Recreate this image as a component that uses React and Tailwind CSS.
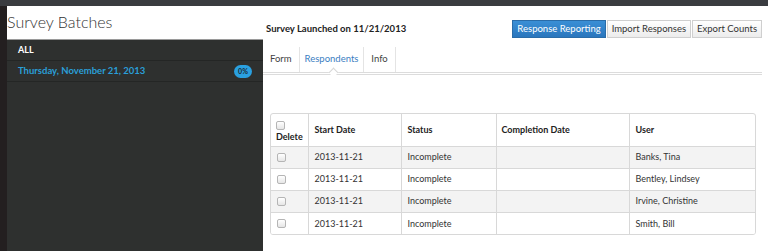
import React from 'react';

const rows = [
  { date: '2013-11-21', status: 'Incomplete', done: '', user: 'Banks, Tina' },
  { date: '2013-11-21', status: 'Incomplete', done: '', user: 'Bentley, Lindsey' },
  { date: '2013-11-21', status: 'Incomplete', done: '', user: 'Irvine, Christine' },
  { date: '2013-11-21', status: 'Incomplete', done: '', user: 'Smith, Bill' },
];

const Box = () => (
  <span className="inline-block w-[9px] h-[9px] rounded-[2px] border border-[#b5b5b5] bg-gradient-to-b from-white to-[#e6e6e6]" />
);

export default function App() {
  return (
    <div className="w-[768px] h-[251px] overflow-hidden bg-white flex flex-col font-['Lato','Open_Sans',sans-serif] text-[#333]">
      <div className="h-[6px] bg-[#3a3c40] shrink-0" />
      <div className="flex flex-1 min-h-0">
        <div className="w-[7px] bg-[#231f20] shrink-0" />

        {/* Batches sidebar */}
        <div className="w-[256px] shrink-0 flex flex-col">
          <div className="h-[34px] bg-white border-b border-[#9a9a9a] flex items-center">
            <h1 className="text-[16px] leading-none font-light text-[#333] pb-[2px]">Survey Batches</h1>
          </div>
          <div className="flex-1 bg-[#2e302f]">
            <div className="h-[21px] border-b border-[#242625] flex items-center pl-[11px]">
              <span className="text-[9px] font-bold text-white">ALL</span>
            </div>
            <div className="h-[21px] border-b border-[#242625] flex items-center justify-between pl-[11px] pr-[11px]">
              <span className="text-[9.5px] font-bold text-[#2a9fd8]">Thursday, November 21, 2013</span>
              <span className="w-[18px] h-[13px] rounded-full bg-[#2aa0e0] flex items-center justify-center text-[7px] font-bold text-[#1d2a33]">0%</span>
            </div>
          </div>
        </div>

        {/* Survey detail */}
        <div className="flex-1 flex flex-col pr-[6px]">
          <div className="flex items-center justify-between pt-[14px] h-[32px] pl-[3px]">
            <span className="text-[9.5px] font-bold text-[#222]">Survey Launched on 11/21/2013</span>
            <div className="flex gap-[1px] text-[9.5px]">
              <button className="h-[18px] px-[4px] bg-gradient-to-b from-[#3a8fd6] to-[#2a76bd] border border-[#2a6ca8] text-white">Response Reporting</button>
              <button className="h-[18px] px-[4px] bg-gradient-to-b from-white to-[#ececec] border border-[#cfcfcf] text-[#333]">Import Responses</button>
              <button className="h-[18px] px-[4px] bg-gradient-to-b from-white to-[#ececec] border border-[#cfcfcf] text-[#333]">Export Counts</button>
            </div>
          </div>

          <div className="mt-[9px] flex border-b-[3px] border-double border-[#dcdcdc] h-[28px] text-[9.5px]">
            <div className="w-[36px] pl-[7px] flex items-center text-[#444]">Form</div>
            <div className="relative w-[65px] border-x border-[#e4e4e4] flex items-center justify-center text-[#3a7ec2]">
              Respondents
              <span className="absolute -bottom-[4px] left-[30px] w-[7px] h-[7px] rotate-45 bg-white border-l border-t border-[#d6d6d6]" />
            </div>
            <div className="w-[32px] border-r border-[#e4e4e4] flex items-center justify-center text-[#444]">Info</div>
          </div>

          <div className="mt-[38px] ml-[7px] w-[486px] border border-[#d8d8d8] rounded-[3px] overflow-hidden">
            <table className="w-full border-collapse text-[9px]">
              <thead>
                <tr className="h-[32px] border-b border-[#d8d8d8] font-bold text-[#222]">
                  <th className="w-[37px] border-r border-[#d8d8d8] pl-[5px] text-left font-bold align-bottom pb-[5px]">
                    <div className="leading-none"><Box /></div>
                    <div className="leading-none mt-[1px]">Delete</div>
                  </th>
                  <th className="w-[93px] border-r border-[#d8d8d8] pl-[6px] text-left font-bold">Start Date</th>
                  <th className="w-[95px] border-r border-[#d8d8d8] pl-[6px] text-left font-bold">Status</th>
                  <th className="w-[133px] border-r border-[#d8d8d8] pl-[5px] text-left font-bold">Completion Date</th>
                  <th className="pl-[6px] text-left font-bold">User</th>
                </tr>
              </thead>
              <tbody>
                {rows.map((r, i) => (
                  <tr key={r.user} className={`h-[22px] border-b last:border-b-0 border-[#d8d8d8] ${i % 2 === 0 ? 'bg-[#f3f3f3]' : 'bg-white'}`}>
                    <td className="border-r border-[#d8d8d8] pl-[6px]"><div className="flex"><Box /></div></td>
                    <td className="border-r border-[#d8d8d8] pl-[6px]">{r.date}</td>
                    <td className="border-r border-[#d8d8d8] pl-[6px]">{r.status}</td>
                    <td className="border-r border-[#d8d8d8] pl-[5px]">{r.done}</td>
                    <td className="pl-[6px]">{r.user}</td>
                  </tr>
                ))}
              </tbody>
            </table>
          </div>
        </div>
      </div>
    </div>
  );
}
